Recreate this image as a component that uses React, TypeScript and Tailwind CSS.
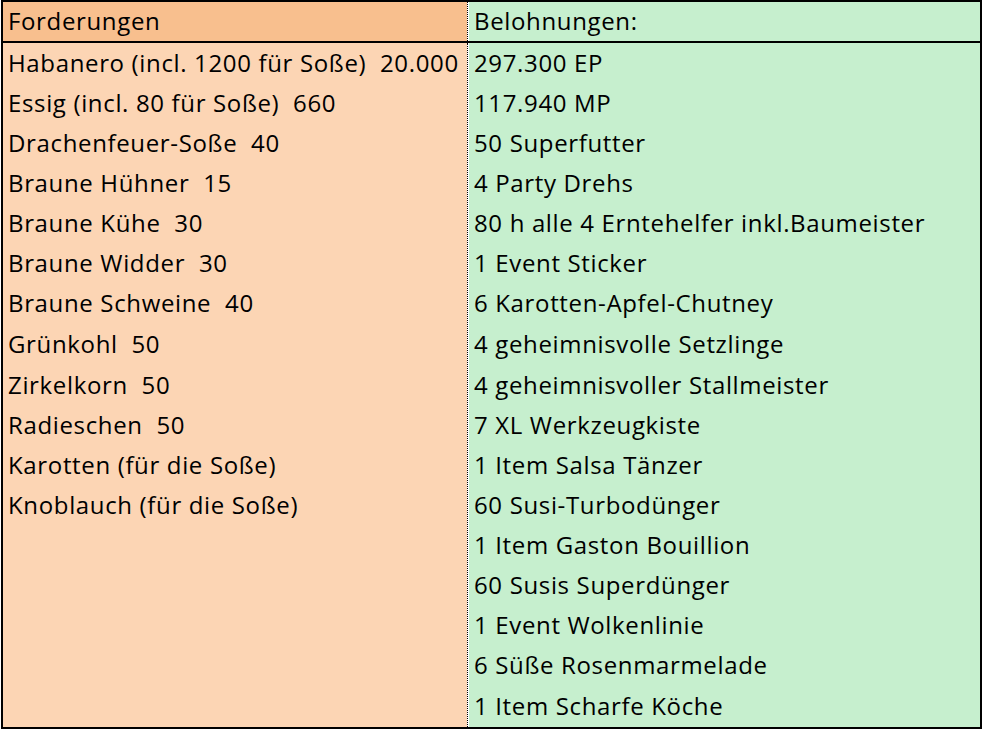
const LEFT = [
  "Habanero (incl. 1200 für Soße)  20.000",
  "Essig (incl. 80 für Soße)  660",
  "Drachenfeuer-Soße  40",
  "Braune Hühner  15",
  "Braune Kühe  30",
  "Braune Widder  30",
  "Braune Schweine  40",
  "Grünkohl  50",
  "Zirkelkorn  50",
  "Radieschen  50",
  "Karotten (für die Soße)",
  "Knoblauch (für die Soße)",
];

const RIGHT = [
  "297.300 EP",
  "117.940 MP",
  "50 Superfutter",
  "4 Party Drehs",
  "80 h alle 4 Erntehelfer inkl.Baumeister",
  "1 Event Sticker",
  "6 Karotten-Apfel-Chutney",
  "4 geheimnisvolle Setzlinge",
  "4 geheimnisvoller Stallmeister",
  "7 XL Werkzeugkiste",
  "1 Item Salsa Tänzer",
  "60 Susi-Turbodünger",
  "1 Item Gaston Bouillion",
  "60 Susis Superdünger",
  "1 Event Wolkenlinie",
  "6 Süße Rosenmarmelade",
  "1 Item Scharfe Köche",
];

// excel row heights are not all equal
const rowH = (i: number) => (i === 7 || i === 16 ? "h-[42px]" : "h-[40px]");

export default function App() {
  return (
    <div className="w-[983px] h-[730px] bg-white text-black" style={{ fontFamily: '"Open Sans", "Noto Sans", sans-serif' }}>
      <div className="ml-[1px] w-[981px] h-[729px] border-2 border-black flex flex-col text-[24px] tracking-[0.65px] leading-none">
        <div className="flex h-[41px] border-b-2 border-black">
          <div className="w-[464px] bg-[#f8bf8e] flex items-center pl-[5px] pb-[2px]">Forderungen</div>
          <div className="w-[2px] bg-white border-l border-dotted border-black" />
          <div className="flex-1 bg-[#c6efce] flex items-center pl-[5px] pb-[2px]">Belohnungen:</div>
        </div>
        <div className="flex flex-1">
          <div className="w-[464px] bg-[#fcd5b4] flex flex-col">
            {LEFT.map((t, i) => (
              <div key={t} className={`${rowH(i)} flex items-center pl-[5px] whitespace-pre`}>{t}</div>
            ))}
          </div>
          <div className="w-[2px] bg-white border-l border-dotted border-black" />
          <div className="flex-1 bg-[#c6efce] flex flex-col">
            {RIGHT.map((t, i) => (
              <div key={t} className={`${rowH(i)} flex items-center pl-[5px] whitespace-pre`}>{t}</div>
            ))}
          </div>
        </div>
      </div>
    </div>
  );
}
